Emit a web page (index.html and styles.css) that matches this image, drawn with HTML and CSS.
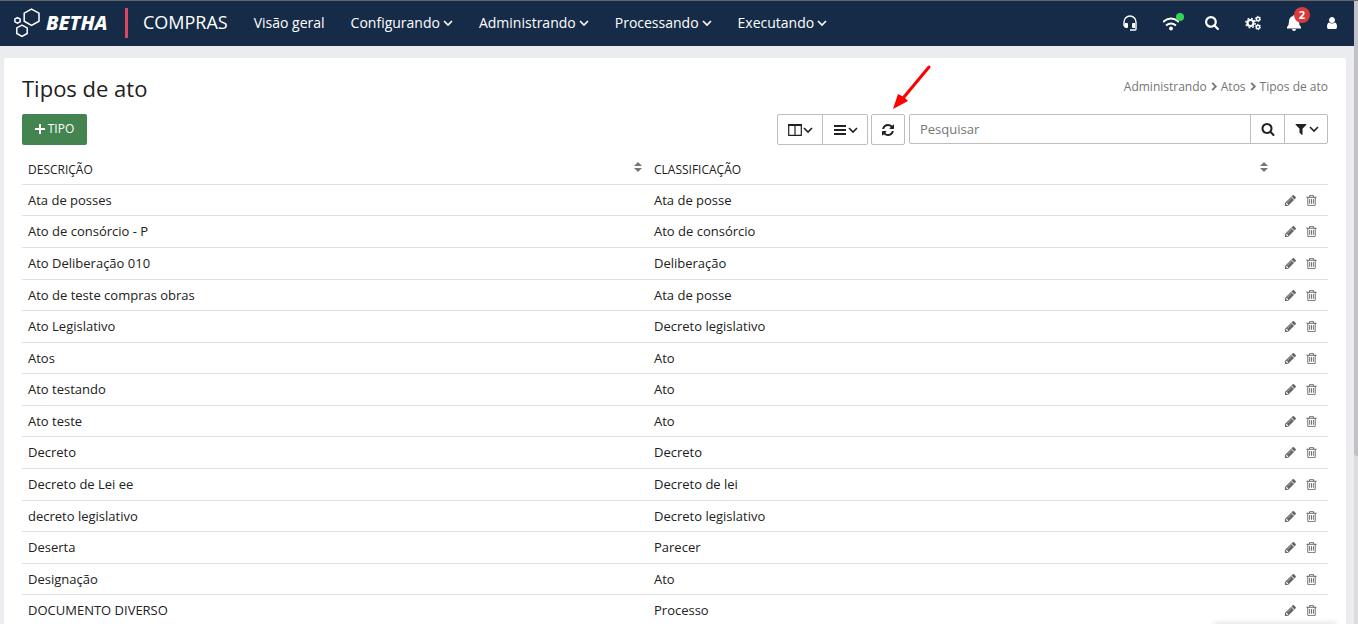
FILE: index.html
```html
<!DOCTYPE html>
<html lang="pt-BR">
<head>
<meta charset="utf-8">
<title>Tipos de ato</title>
<link rel="stylesheet" href="styles.css">
</head>
<body>
<svg class="defs" aria-hidden="true">
  <symbol id="search" viewBox="0 0 1792 1792"><path d="M1216 832q0-185-131.500-316.500t-316.500-131.500-316.500 131.500-131.500 316.500 131.500 316.500 316.500 131.500 316.500-131.500 131.500-316.500zm512 832q0 52-38 90t-90 38q-54 0-90-38l-343-342q-179 124-399 124-143 0-273.500-55.500t-225-150-150-225-55.500-273.500 55.500-273.500 150-225 225-150 273.500-55.500 273.500 55.500 225 150 150 225 55.500 273.500q0 220-124 399l343 343q37 37 37 90z"/></symbol>
  <symbol id="refresh" viewBox="0 0 1792 1792"><path d="M1639 1056q0 5-1 7-64 268-268 434.500t-478 166.500q-146 0-282.500-55t-243.500-157l-129 129q-19 19-45 19t-45-19-19-45v-448q0-26 19-45t45-19h448q26 0 45 19t19 45-19 45l-137 137q71 66 161 102t187 36q134 0 250-65t186-179q11-17 53-117 8-23 30-23h192q13 0 22.500 9.500t9.500 22.500zm25-800v448q0 26-19 45t-45 19h-448q-26 0-45-19t-19-45 19-45l138-138q-148-137-349-137-134 0-250 65t-186 179q-11 17-53 117-8 23-30 23h-199q-13 0-22.500-9.500t-9.500-22.500v-7q65-268 270-434.500t480-166.500q146 0 284 55.500t245 156.500l130-129q19-19 45-19t45 19 19 45z"/></symbol>
  <symbol id="pencil" viewBox="0 0 1792 1792"><path d="M491 1536l91-91-235-235-91 91v107h128v128h107zm523-928q0-22-22-22-10 0-17 7l-542 542q-7 7-7 17 0 22 22 22 10 0 17-7l542-542q7-7 7-17zm-54-192l416 416-832 832h-416v-416zm683 96q0 53-37 90l-166 166-416-416 166-165q36-38 90-38 53 0 91 38l235 234q37 39 37 91z"/></symbol>
  <symbol id="trash" viewBox="0 0 1792 1792"><path d="M704 736v576q0 14-9 23t-23 9h-64q-14 0-23-9t-9-23v-576q0-14 9-23t23-9h64q14 0 23 9t9 23zm256 0v576q0 14-9 23t-23 9h-64q-14 0-23-9t-9-23v-576q0-14 9-23t23-9h64q14 0 23 9t9 23zm256 0v576q0 14-9 23t-23 9h-64q-14 0-23-9t-9-23v-576q0-14 9-23t23-9h64q14 0 23 9t9 23zm128 724v-948h-896v948q0 22 7 40.500t14.500 27 10.500 8.500h832q3 0 10.500-8.500t14.500-27 7-40.500zm-672-1076h448l-48-117q-7-9-17-11h-317q-10 2-17 11zm928 32v64q0 14-9 23t-23 9h-96v948q0 83-47 143.500t-113 60.500h-832q-66 0-113-58.500t-47-141.500v-952h-96q-14 0-23-9t-9-23v-64q0-14 9-23t23-9h309l70-167q15-37 54-63t79-26h320q40 0 79 26t54 63l70 167h309q14 0 23 9t9 23z"/></symbol>
  <symbol id="filter" viewBox="0 0 1792 1792"><path d="M1595 295q17 41-14 70l-493 493v742q0 42-39 59-13 5-25 5-27 0-45-19l-256-256q-19-19-19-45v-486l-493-493q-31-29-14-70 17-39 59-39h1280q42 0 59 39z"/></symbol>
  <symbol id="user" viewBox="256 0 1280 1792"><path d="M1536 1399q0 109-62.500 187t-150.500 78h-854q-88 0-150.500-78t-62.500-187q0-85 8.500-160.500t31.500-152 58.500-131 94-89 134.500-34.500q131 128 313 128t313-128q76 0 134.500 34.500t94 89 58.500 131 31.500 152 8.500 160.500zm-256-887q0 159-112.500 271.500t-271.500 112.500-271.500-112.500-112.500-271.500 112.500-271.500 271.500-112.500 271.500 112.500 112.500 271.500z"/></symbol>
  <symbol id="chevron" viewBox="0 0 10 10"><path d="M1 3l4 4 4-4" fill="none" stroke="currentColor" stroke-width="1.600"/></symbol>
  <symbol id="chevron-right" viewBox="0 0 10 10"><path d="M3 1l4 4-4 4" fill="none" stroke="currentColor" stroke-width="2"/></symbol>
  <symbol id="sort" viewBox="0 0 8 10"><path d="M0 4l4-4 4 4zM0 6h8l-4 4z"/></symbol>
  <symbol id="headset" viewBox="0 0 16 16"><path d="M2 11V7a6 6 0 0 1 12 0v7q0 1-1 1H8" fill="none" stroke="currentColor" stroke-width="1.400"/><path d="M3 8h2q1 0 1 1v3q0 1-1 1H4q-2 0-2-2zM13 8h-2q-1 0-1 1v3q0 1 1 1h2z"/></symbol>
  <symbol id="wifi" viewBox="0 0 16 16"><path d="M0 7q8-7 16 0M3 10.500q5-4 10 0" fill="none" stroke="currentColor" stroke-width="1.900"/><circle cx="8" cy="13.500" r="1.900"/></symbol>
  <symbol id="cogs" viewBox="0 0 16 16"><g fill="none" stroke="currentColor"><circle cx="5.500" cy="8" r="3" stroke-width="2.200"/><circle cx="5.500" cy="8" r="4.700" stroke-width="1.400" stroke-dasharray="1.850 1.840"/><circle cx="13" cy="4" r="1.700" stroke-width="1.500"/><circle cx="13" cy="4" r="2.700" stroke-width="1" stroke-dasharray="1.410 1.417"/><circle cx="13" cy="12" r="1.700" stroke-width="1.500"/><circle cx="13" cy="12" r="2.700" stroke-width="1" stroke-dasharray="1.410 1.417"/></g></symbol>
  <symbol id="bell" viewBox="0 0 16 16"><path d="M8 0q1 0 1 1 4 1 4 5.500 0 4 2 5.500V13.500H1V12q2-1.500 2-5.500Q3 2 7 1q0-1 1-1zM6 14h4q0 2-2 2t-2-2z"/></symbol>
  <symbol id="columns" viewBox="0 0 14 12"><path d="M.700 1.500h12.600v9.800H.700zM7 1v10" fill="none" stroke="currentColor" stroke-width="1.200"/><path d="M0 0h14v2H0z"/></symbol>
  <symbol id="list" viewBox="0 0 12 12"><path d="M0 1h12v2H0zM0 5h12v2H0zM0 9h12v2H0z"/></symbol>
  <symbol id="plus" viewBox="0 0 10 10"><path d="M4 0h2v4h4v2H6v4H4V6H0V4h4z"/></symbol>
</svg>

<div class="app">
  <header class="topbar">
    <a class="brand" href="#">
      <svg class="brand-mark" viewBox="0 0 28 30"><path d="M17.500 1.200l7.500 4v8l-7.500 4.200-7.300-4.200v-8zM8 17.200l5.200 2.700v5.600L8 28.300l-5.200-2.800v-5.600zM3.500 9.700l2.600 1.200v3l-2.600 1.300L.900 13.900v-3z"/></svg>
      <span class="brand-name">BETHA</span>
    </a>
    <span class="product">COMPRAS</span>
    <nav class="menu">
      <a href="#">Visão geral</a>
      <a href="#">Configurando <svg class="caret"><use href="#chevron"/></svg></a>
      <a href="#">Administrando <svg class="caret"><use href="#chevron"/></svg></a>
      <a href="#">Processando <svg class="caret"><use href="#chevron"/></svg></a>
      <a href="#">Executando <svg class="caret"><use href="#chevron"/></svg></a>
    </nav>
    <div class="tools">
      <button aria-label="Suporte"><svg class="icon"><use href="#headset"/></svg></button>
      <button aria-label="Conexão"><svg class="icon"><use href="#wifi"/></svg><span class="online"></span></button>
      <button aria-label="Buscar"><svg class="icon search-icon"><use href="#search"/></svg></button>
      <button aria-label="Configurações"><svg class="icon"><use href="#cogs"/></svg></button>
      <button aria-label="Notificações"><svg class="icon"><use href="#bell"/></svg><span class="badge">2</span></button>
      <button aria-label="Usuário"><svg class="icon user-icon"><use href="#user"/></svg></button>
    </div>
  </header>

  <main class="card">
    <div class="heading">
      <h1>Tipos de ato</h1>
      <nav class="crumbs"><a href="#">Administrando</a><svg><use href="#chevron-right"/></svg><a href="#">Atos</a><svg><use href="#chevron-right"/></svg><span>Tipos de ato</span></nav>
    </div>
    <div class="toolbar">
      <button class="add"><svg><use href="#plus"/></svg>TIPO</button>
      <div class="group">
        <button class="wide" aria-label="Colunas"><svg class="glyph"><use href="#columns"/></svg><svg class="caret"><use href="#chevron"/></svg></button>
        <button class="wide" aria-label="Densidade"><svg class="glyph"><use href="#list"/></svg><svg class="caret"><use href="#chevron"/></svg></button>
      </div>
      <div class="group refresh">
        <button aria-label="Atualizar"><svg class="glyph"><use href="#refresh"/></svg></button>
        <svg class="pointer" viewBox="0 0 40 46" aria-hidden="true"><path d="M37 3L12 33" stroke="#fe0000" stroke-width="3" stroke-linecap="round"/><path d="M1 45L6 30l6 3 4 4z" fill="#fe0000"/></svg>
      </div>
      <form class="group search">
        <input type="text" placeholder="Pesquisar" aria-label="Pesquisar">
        <button type="button" aria-label="Pesquisar"><svg class="glyph"><use href="#search"/></svg></button>
        <button type="button" class="wide" aria-label="Filtros"><svg class="glyph"><use href="#filter"/></svg><svg class="caret"><use href="#chevron"/></svg></button>
      </form>
    </div>
    <table class="grid">
      <colgroup><col><col><col class="actions-col"></colgroup>
      <thead>
        <tr><th><div>DESCRIÇÃO<svg><use href="#sort"/></svg></div></th><th><div>CLASSIFICAÇÃO<svg><use href="#sort"/></svg></div></th><th></th></tr>
      </thead>
      <tbody>
        <tr><td>Ata de posses</td><td>Ata de posse</td><td><div class="actions"><button aria-label="Editar"><svg><use href="#pencil"/></svg></button><button aria-label="Excluir"><svg><use href="#trash"/></svg></button></div></td></tr>
        <tr><td>Ato de consórcio - P</td><td>Ato de consórcio</td><td><div class="actions"><button aria-label="Editar"><svg><use href="#pencil"/></svg></button><button aria-label="Excluir"><svg><use href="#trash"/></svg></button></div></td></tr>
        <tr><td>Ato Deliberação 010</td><td>Deliberação</td><td><div class="actions"><button aria-label="Editar"><svg><use href="#pencil"/></svg></button><button aria-label="Excluir"><svg><use href="#trash"/></svg></button></div></td></tr>
        <tr><td>Ato de teste compras obras</td><td>Ata de posse</td><td><div class="actions"><button aria-label="Editar"><svg><use href="#pencil"/></svg></button><button aria-label="Excluir"><svg><use href="#trash"/></svg></button></div></td></tr>
        <tr><td>Ato Legislativo</td><td>Decreto legislativo</td><td><div class="actions"><button aria-label="Editar"><svg><use href="#pencil"/></svg></button><button aria-label="Excluir"><svg><use href="#trash"/></svg></button></div></td></tr>
        <tr><td>Atos</td><td>Ato</td><td><div class="actions"><button aria-label="Editar"><svg><use href="#pencil"/></svg></button><button aria-label="Excluir"><svg><use href="#trash"/></svg></button></div></td></tr>
        <tr><td>Ato testando</td><td>Ato</td><td><div class="actions"><button aria-label="Editar"><svg><use href="#pencil"/></svg></button><button aria-label="Excluir"><svg><use href="#trash"/></svg></button></div></td></tr>
        <tr><td>Ato teste</td><td>Ato</td><td><div class="actions"><button aria-label="Editar"><svg><use href="#pencil"/></svg></button><button aria-label="Excluir"><svg><use href="#trash"/></svg></button></div></td></tr>
        <tr><td>Decreto</td><td>Decreto</td><td><div class="actions"><button aria-label="Editar"><svg><use href="#pencil"/></svg></button><button aria-label="Excluir"><svg><use href="#trash"/></svg></button></div></td></tr>
        <tr><td>Decreto de Lei ee</td><td>Decreto de lei</td><td><div class="actions"><button aria-label="Editar"><svg><use href="#pencil"/></svg></button><button aria-label="Excluir"><svg><use href="#trash"/></svg></button></div></td></tr>
        <tr><td>decreto legislativo</td><td>Decreto legislativo</td><td><div class="actions"><button aria-label="Editar"><svg><use href="#pencil"/></svg></button><button aria-label="Excluir"><svg><use href="#trash"/></svg></button></div></td></tr>
        <tr><td>Deserta</td><td>Parecer</td><td><div class="actions"><button aria-label="Editar"><svg><use href="#pencil"/></svg></button><button aria-label="Excluir"><svg><use href="#trash"/></svg></button></div></td></tr>
        <tr><td>Designação</td><td>Ato</td><td><div class="actions"><button aria-label="Editar"><svg><use href="#pencil"/></svg></button><button aria-label="Excluir"><svg><use href="#trash"/></svg></button></div></td></tr>
        <tr><td>DOCUMENTO DIVERSO</td><td>Processo</td><td><div class="actions"><button aria-label="Editar"><svg><use href="#pencil"/></svg></button><button aria-label="Excluir"><svg><use href="#trash"/></svg></button></div></td></tr>
      </tbody>
    </table>
  </main>
</div>
<div class="scroll-rail"><div class="scroll-thumb"></div></div>
<div class="dock"></div>
</body>
</html>
```
FILE: styles.css
```css
* { box-sizing: border-box; }
body {
  margin: 0;
  height: 100vh;
  overflow: hidden;
  display: flex;
  background: #ebecf0;
  border-top: 1px solid #666;
  color: #212121;
  font: 13px/19px "Open Sans", sans-serif;
}
a { color: inherit; text-decoration: none; }
button { font: inherit; color: inherit; border: 0; padding: 0; background: none; cursor: pointer; }
svg { fill: currentColor; display: block; flex: none; }
.defs { position: absolute; width: 0; height: 0; }
.app { flex: 1; min-width: 0; display: flex; flex-direction: column; overflow: hidden; }

.topbar {
  display: flex;
  align-items: center;
  flex: none;
  height: 45px;
  padding: 0 17px 2px 14px;
  background: #152b47;
  color: #fff;
}
.brand { display: flex; align-items: center; gap: 4px; min-width: 114px; border-right: 3px solid #dd4560; height: 30px; }
.brand-mark { width: 28px; height: 30px; }
.brand-mark path { fill: none; stroke: currentColor; stroke-width: 1.5; }
.brand-name { font-family: "Noto Sans", "Open Sans", sans-serif; font-size: 20px; font-weight: 800; font-style: italic; }
.product { font-size: 18px; margin-left: 15px; }
.menu { display: flex; gap: 26px; margin-left: 26px; font-size: 14px; font-weight: 500; }
.menu a { display: flex; align-items: center; gap: 3px; }
.caret { width: 10px; height: 10px; }
.tools { display: flex; align-items: center; gap: 25px; margin-left: auto; }
.tools button { position: relative; }
.icon { width: 16px; height: 16px; }
.search-icon { height: 15px; }
.user-icon { width: 10px; height: 14px; }
.online { position: absolute; top: -2px; right: -5px; width: 8px; height: 8px; border-radius: 50%; background: #32d657; }
.badge {
  position: absolute; top: -8px; right: -8px; width: 16px; height: 16px;
  border-radius: 50%; background: #d93b3b; font-size: 11px; line-height: 16px; font-weight: 700;
}

.card { flex: 1 0 auto; margin: 12px 8px 0 4px; padding: 17px 18px 0; background: #fff; border-radius: 2px; }
.heading { display: flex; justify-content: space-between; }
h1 { margin: 0; font-size: 22px; line-height: 26px; font-weight: 400; }
.crumbs { display: flex; align-items: center; gap: 2px; height: 23px; font-size: 12px; color: #757575; }
.crumbs svg { width: 10px; height: 9px; }

.toolbar { display: flex; align-items: flex-start; margin-top: 13px; }
.add {
  display: flex; align-items: center; justify-content: center; gap: 3px;
  height: 31px; width: 65px; margin-right: auto; padding-bottom: 2px;
  border-radius: 2px; background: #448450; color: #fff; font-size: 12px;
}
.add svg { width: 10px; height: 10px; }
.group { display: flex; border: 1px solid #bdbdbd; border-radius: 2px; height: 31px; }
.group button { display: flex; align-items: center; justify-content: center; width: 32px; height: 100%; }
.group .wide { width: 44px; gap: 1px; }
.group > * + button { border-left: 1px solid #bdbdbd; box-sizing: content-box; }
.glyph { width: 14px; height: 12px; }
.refresh { position: relative; margin: 0 4px 0 3px; }
.refresh .glyph, .search .glyph { height: 14px; }
.pointer { position: absolute; left: 20px; bottom: 34px; width: 40px; height: 46px; }
.search { height: 30px; width: 419px; }
.search input { flex: 1; min-width: 0; border: 0; padding: 0 10px; background: none; font: inherit; outline: 0; }
.search input::placeholder { color: #757575; opacity: 1; }
.search .wide { width: 42px; }
.search button:not(.wide) { width: 33px; }

.grid { width: 100%; margin-top: 8px; table-layout: fixed; border-collapse: separate; border-spacing: 0; }
.actions-col { width: 54px; }
.grid th, .grid td { padding: 0 6px; height: 32px; text-align: left; font-weight: 400; border-bottom: 1px solid #e0e0e0; }
.grid th { padding-top: 2px; font-size: 12px; font-weight: 500; }
.grid th div { display: flex; justify-content: space-between; }
.grid th svg { width: 8px; height: 10px; margin-top: 2px; color: #757575; }
.grid tr:nth-child(7n+1) td, .grid tr:nth-child(7n+4) td, .grid tr:nth-child(7n+6) td { height: 31px; }
.actions { display: flex; gap: 8px; padding-left: 4px; color: #666; }
.actions svg { width: 13px; height: 13px; }

.scroll-rail { width: 4px; background: #dcdcdf; }
.scroll-thumb { height: 73%; background: #c1c1c6; border-radius: 0 0 0 3px; }
.dock { position: fixed; right: 22px; bottom: -4px; width: 122px; height: 4px; box-shadow: 0 0 6px rgba(0, 0, 0, .2); }
```
